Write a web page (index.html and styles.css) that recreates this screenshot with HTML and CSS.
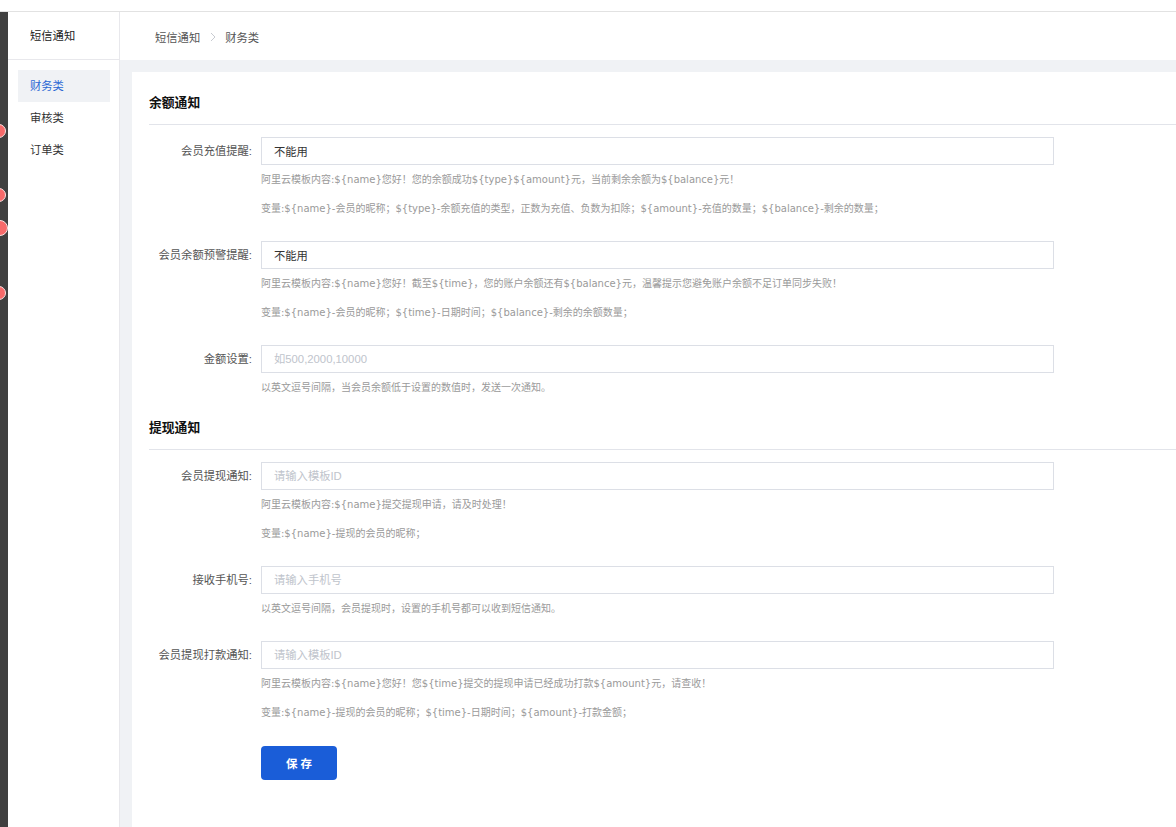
FILE: index.html
```html
<!DOCTYPE html>
<html lang="zh-CN">
<head>
  <meta charset="UTF-8">
  <meta name="viewport" content="width=device-width, initial-scale=1.0">
  <title>短信通知 - 财务类</title>
  <link rel="stylesheet" href="styles.css">
</head>
<body>
  <div class="topbar"></div>
  <div class="layout">
    <div class="dock">
      <span class="dot" style="top:112px"></span>
      <span class="dot" style="top:176px"></span>
      <span class="dot dot-big" style="top:208px"></span>
      <span class="dot" style="top:274px"></span>
    </div>

    <div class="side">
      <div class="side-head">短信通知</div>
      <ul class="side-menu">
        <li class="active">财务类</li>
        <li>审核类</li>
        <li>订单类</li>
      </ul>
    </div>

    <div class="main">
      <div class="crumb">
        <span>短信通知</span>
        <svg class="sep" width="6" height="10" viewBox="0 0 6 10"><path d="M1 1l4 4-4 4" fill="none" stroke="#c8cbd1" stroke-width="1"/></svg>
        <span>财务类</span>
      </div>

      <div class="card">
        <form id="form">
          <div class="section">
            <h3 class="section-title">余额通知</h3>
            <div class="form-item">
              <label>会员充值提醒:</label>
              <div class="control">
                <input type="text" value="不能用">
                <p class="tip">阿里云模板内容:${name}您好！您的余额成功${type}${amount}元，当前剩余余额为${balance}元！</p>
                <p class="tip">变量:${name}-会员的昵称；${type}-余额充值的类型，正数为充值、负数为扣除；${amount}-充值的数量；${balance}-剩余的数量；</p>
              </div>
            </div>
            <div class="form-item">
              <label>会员余额预警提醒:</label>
              <div class="control">
                <input type="text" value="不能用">
                <p class="tip">阿里云模板内容:${name}您好！截至${time}，您的账户余额还有${balance}元，温馨提示您避免账户余额不足订单同步失败！</p>
                <p class="tip">变量:${name}-会员的昵称；${time}-日期时间；${balance}-剩余的余额数量；</p>
              </div>
            </div>
            <div class="form-item">
              <label>金额设置:</label>
              <div class="control">
                <input type="text" placeholder="如500,2000,10000">
                <p class="tip">以英文逗号间隔，当会员余额低于设置的数值时，发送一次通知。</p>
              </div>
            </div>
          </div>

          <div class="section">
            <h3 class="section-title">提现通知</h3>
            <div class="form-item">
              <label>会员提现通知:</label>
              <div class="control">
                <input type="text" placeholder="请输入模板ID">
                <p class="tip">阿里云模板内容:${name}提交提现申请，请及时处理！</p>
                <p class="tip">变量:${name}-提现的会员的昵称；</p>
              </div>
            </div>
            <div class="form-item">
              <label>接收手机号:</label>
              <div class="control">
                <input type="text" placeholder="请输入手机号">
                <p class="tip">以英文逗号间隔，会员提现时，设置的手机号都可以收到短信通知。</p>
              </div>
            </div>
            <div class="form-item">
              <label>会员提现打款通知:</label>
              <div class="control">
                <input type="text" placeholder="请输入模板ID">
                <p class="tip">阿里云模板内容:${name}您好！您${time}提交的提现申请已经成功打款${amount}元，请查收！</p>
                <p class="tip">变量:${name}-提现的会员的昵称；${time}-日期时间；${amount}-打款金额；</p>
              </div>
            </div>
          </div>

          <div class="form-actions">
            <button type="submit" class="btn">保 存</button>
          </div>
        </form>
      </div>
    </div>
  </div>

  <script>
    document.getElementById('form').addEventListener('submit', function(e) {
      e.preventDefault();
    });
  </script>
</body>
</html>
```

FILE: styles.css
```css
* {
  box-sizing: border-box;
}
body {
  margin: 0;
  font-family: "Liberation Sans", "Noto Sans CJK SC", sans-serif;
  font-size: 11.3px;
  color: #333;
  background: #fff;
}
ul, p, h3 {
  margin: 0;
  padding: 0;
}
.topbar {
  height: 12px;
  border-bottom: 1px solid #e2e2e2;
  background: #fff;
}
.layout {
  display: flex;
  min-height: calc(100vh - 12px);
}
.dock {
  width: 8px;
  background: #404040;
  position: relative;
  overflow: hidden;
  flex-shrink: 0;
}
.dot {
  position: absolute;
  left: -8px;
  width: 14px;
  height: 14px;
  border-radius: 50%;
  background: #f76a6a;
  border: 1px solid #fbe3e3;
}
.dot-big {
  width: 16px;
  height: 16px;
  left: -8px;
}
.side {
  width: 112px;
  flex-shrink: 0;
  border-right: 1px solid #e8e8ec;
  background: #fff;
}
.side-head {
  height: 48px;
  line-height: 49px;
  padding-left: 22px;
  border-bottom: 1px solid #e8e8ec;
  color: #222;
}
.side-menu {
  list-style: none;
  padding: 10px 9px 0 10px;
}
.side-menu li {
  height: 32px;
  line-height: 32px;
  padding-left: 12px;
  color: #333;
  cursor: pointer;
}
.side-menu li.active {
  background: #f0f2f5;
  color: #2a67d4;
}
.main {
  flex: 1;
  display: flex;
  flex-direction: column;
  background: #f0f2f5;
  min-width: 0;
}
.crumb {
  height: 48px;
  padding-left: 35px;
  background: #fff;
  color: #555;
  display: flex;
  align-items: center;
  padding-top: 1px;
}
.crumb .sep {
  margin: 0 9px 0 10px;
}
.card {
  flex: 1;
  margin: 12px 0 0 12px;
  padding: 21px 0 47px 17px;
  background: #fff;
}
.section-title {
  font-size: 12.8px;
  font-weight: bold;
  color: #111;
  line-height: 20px;
  padding-bottom: 11px;
  border-bottom: 1px solid #e2e4ea;
  margin-bottom: 12px;
}
.form-item {
  display: flex;
  margin-bottom: 23px;
}
.section .form-item:last-child {
  margin-bottom: 21px;
}
.form-item label {
  width: 112px;
  padding-right: 9px;
  text-align: right;
  line-height: 28px;
  color: #555;
  flex-shrink: 0;
}
.control {
  width: 793px;
}
.control input {
  width: 100%;
  height: 28px;
  padding: 0 12px;
  border: 1px solid #dcdfe6;
  border-radius: 0;
  font-family: inherit;
  font-size: 11.3px;
  color: #333;
  outline: none;
}
.control input::placeholder {
  color: #c0c4cc;
}
.tip {
  font-family: "DejaVu Sans", "Noto Sans CJK SC", sans-serif;
  font-size: 10px;
  line-height: 18px;
  color: #9a9a9a;
  margin-top: 6px;
  white-space: nowrap;
}
.tip + .tip {
  margin-top: 11px;
}
.form-actions {
  padding-left: 112px;
  margin-top: 24px;
}
.btn {
  width: 76px;
  height: 34px;
  border: none;
  border-radius: 4px;
  background: #1a5dd8;
  color: #fff;
  font-family: inherit;
  font-size: 11.5px;
  font-weight: bold;
  cursor: pointer;
}
.btn:hover {
  opacity: 0.9;
}
```
